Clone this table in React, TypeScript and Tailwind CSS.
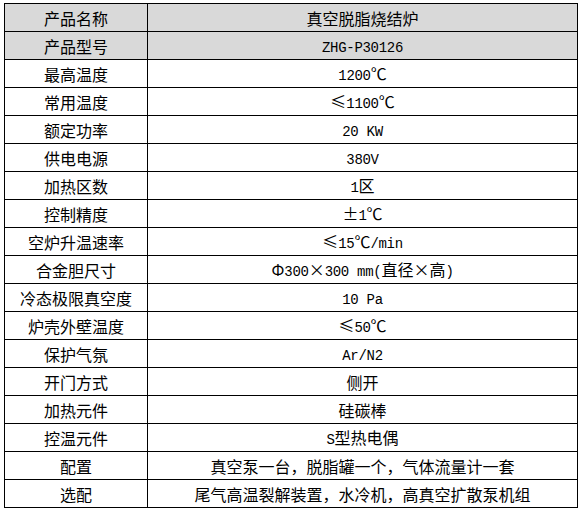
import React from 'react';

const rows: [string, string][] = [
  ['产品名称', '真空脱脂烧结炉'],
  ['产品型号', 'ZHG-P30126'],
  ['最高温度', '1200℃'],
  ['常用温度', '≤1100℃'],
  ['额定功率', '20 KW'],
  ['供电电源', '380V'],
  ['加热区数', '1区'],
  ['控制精度', '±1℃'],
  ['空炉升温速率', '≤15℃/min'],
  ['合金胆尺寸', 'Φ300×300 mm(直径×高)'],
  ['冷态极限真空度', '10 Pa'],
  ['炉壳外壁温度', '≤50℃'],
  ['保护气氛', 'Ar/N2'],
  ['开门方式', '侧开'],
  ['加热元件', '硅碳棒'],
  ['控温元件', 'S型热电偶'],
  ['配置', '真空泵一台，脱脂罐一个，气体流量计一套'],
  ['选配', '尾气高温裂解装置，水冷机，高真空扩散泵机组'],
];

// latin runs get a half-width mono face, like the SimSun original
const Mixed = ({ text }: { text: string }) => {
  const parts = text.match(/[\x20-\x7e]+|[^\x20-\x7e]+/g) || [];
  return (
    <span>
      {parts.map((p, i) =>
        /^[\x20-\x7e]+$/.test(p) ? (
          <span key={i} className="font-['Liberation_Mono',monospace] text-[14px] tracking-[-0.3px] whitespace-pre">{p}</span>
        ) : (
          <span key={i}>{p}</span>
        )
      )}
    </span>
  );
};

export default function App() {
  return (
    <div className="w-[583px] h-[510px] bg-white pl-[4px] pt-[3px] font-['Noto_Sans_CJK_SC',sans-serif] text-[16px] text-black">
      <div className="w-[574px] border-l border-t border-black">
        {rows.map(([k, v], i) => (
          <div key={k} className={`flex h-[28px] ${i < 2 ? 'bg-[#d9d9d9]' : 'bg-white'}`}>
            <div className="w-[143px] h-full border-r border-b border-black flex items-center justify-center leading-none pt-[1px]">
              {k}
            </div>
            <div className="w-[430px] h-full border-r border-b border-black flex items-center justify-center leading-none pt-[1px]">
              <Mixed text={v} />
            </div>
          </div>
        ))}
      </div>
    </div>
  );
}
